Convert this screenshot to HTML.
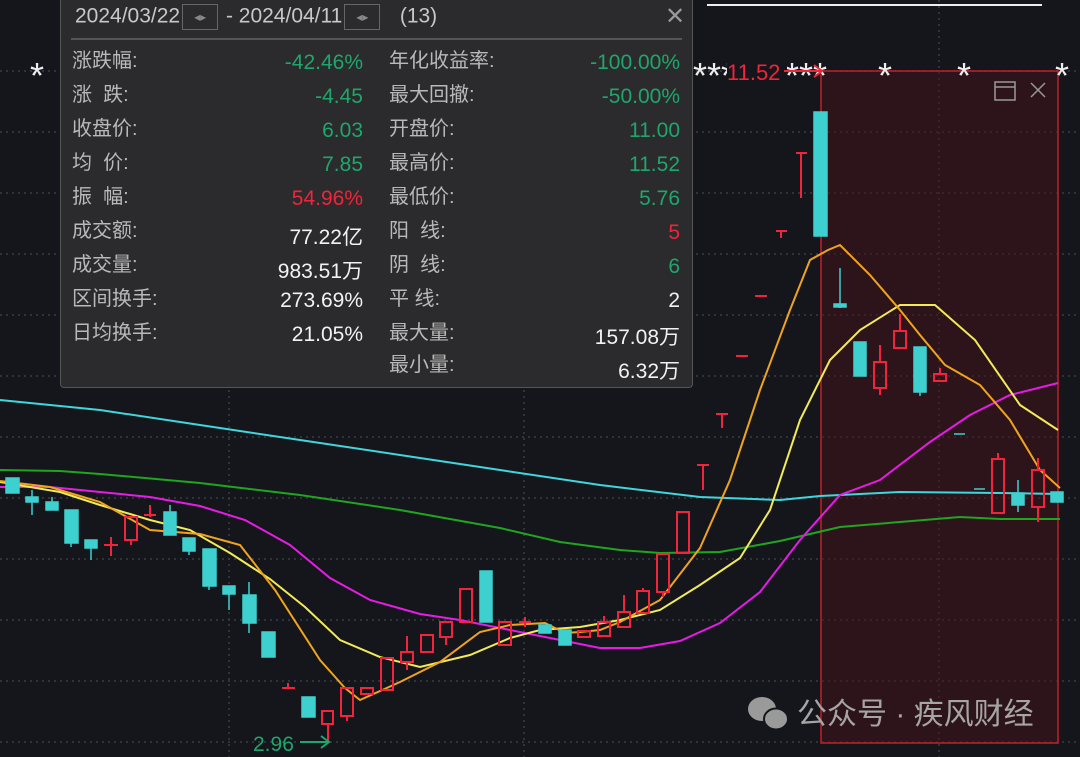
<!DOCTYPE html>
<html><head><meta charset="utf-8"><style>
body{margin:0;background:#14161b;width:1080px;height:757px;overflow:hidden;position:relative;font-family:"Liberation Sans","Noto Sans CJK SC",sans-serif}
svg{position:absolute;left:0;top:0}
.panel{position:absolute;left:60px;top:0;width:633px;height:388px;background:rgba(44,44,46,0.97);border:1px solid #555;border-top:none;border-radius:0 0 4px 4px;box-sizing:border-box}
.hd{position:absolute;top:4px;left:14px;color:#c8c8c8;font-size:21px;white-space:nowrap}
.ab{display:inline-block;width:34px;height:24px;border:1px solid #666;vertical-align:middle;margin:0 2px;font-size:12px;color:#888;text-align:center;line-height:24px}
.sep{position:absolute;left:10px;right:10px;top:38px;border-top:2px solid #555}
.r{position:absolute;font-size:20px;white-space:nowrap}
.l{color:#b9b9b9}
.v{text-align:right;width:200px;font-size:21px}
.g{color:#1fa66c}.rd{color:#f0243a}.w{color:#f2f2f2}
</style></head><body>
<svg width="1080" height="757">
<g stroke="#3a3d44" stroke-width="1.5" stroke-dasharray="2 4">
<line x1="0" y1="71" x2="1080" y2="71"/><line x1="0" y1="132" x2="1080" y2="132"/><line x1="0" y1="193" x2="1080" y2="193"/><line x1="0" y1="254" x2="1080" y2="254"/><line x1="0" y1="315" x2="1080" y2="315"/><line x1="0" y1="376" x2="1080" y2="376"/><line x1="0" y1="437" x2="1080" y2="437"/><line x1="0" y1="498" x2="1080" y2="498"/><line x1="0" y1="559" x2="1080" y2="559"/><line x1="0" y1="620" x2="1080" y2="620"/><line x1="0" y1="681" x2="1080" y2="681"/><line x1="0" y1="742" x2="1080" y2="742"/>
<line x1="229" y1="0" x2="229" y2="757"/><line x1="524" y1="0" x2="524" y2="757"/><line x1="939" y1="0" x2="939" y2="757"/>
</g>
<line x1="707" y1="5" x2="1042" y2="5" stroke="#eee" stroke-width="2"/>
<rect x="821" y="71" width="237" height="672" fill="rgba(70,18,26,0.5)" stroke="#c0202a" stroke-width="1.5"/>
<g fill="none" stroke-width="2">
<polyline stroke="#3fd6dc" points="0,400 100,410 200,425 300,440 400,455 500,470 600,485 700,497 780,500 820,496 900,492 1000,493 1060,494"/>
<polyline stroke="#1fa51f" points="0,470 60,471 100,474 200,483 300,495 400,510 500,528 560,542 620,550 660,553 720,552 780,541 840,527 900,522 960,517 1000,519 1060,519"/>
<polyline stroke="#e61ce6" points="0,487 50,487 100,492 150,497 200,506 245,520 290,545 330,578 370,600 420,614 460,620 500,628 560,640 600,648 640,648 680,641 720,623 760,592 800,540 840,495 880,480 930,442 970,415 1010,395 1058,383"/>
<polyline stroke="#f2ea58" points="0,482 60,492 100,505 150,520 190,530 230,553 270,579 305,607 340,640 380,657 420,667 470,655 510,638 540,630 580,627 620,620 660,610 700,585 740,558 770,510 800,420 830,360 860,330 900,305 935,305 975,340 1020,405 1058,430"/>
<polyline stroke="#f0a31e" points="0,481 50,487 100,502 150,530 200,534 240,545 275,590 320,660 345,688 360,700 400,682 440,662 480,632 510,625 545,623 565,633 580,632 600,630 620,622 660,600 700,548 730,480 760,390 790,310 810,260 828,250 840,245 870,275 900,310 920,335 945,365 980,385 1010,420 1040,470 1060,488"/>
</g>
<g fill="#3ecfcf" stroke="#3ecfcf" stroke-width="1.5">
<rect x="6" y="478" width="13" height="15"/>
<line x1="32" y1="490" x2="32" y2="515"/><rect x="26" y="497" width="12" height="5"/>
<line x1="52" y1="497" x2="52" y2="510"/><rect x="46" y="502" width="12" height="8"/>
<rect x="65" y="510" width="13" height="33"/><line x1="71" y1="543" x2="71" y2="547"/>
<rect x="85" y="540" width="12" height="8"/><line x1="91" y1="548" x2="91" y2="560"/>
<rect x="164" y="512" width="12" height="23"/><line x1="170" y1="505" x2="170" y2="512"/>
<rect x="183" y="538" width="12" height="13"/><line x1="189" y1="551" x2="189" y2="555"/>
<rect x="203" y="549" width="13" height="37"/><line x1="209" y1="586" x2="209" y2="590"/>
<rect x="223" y="586" width="12" height="8"/><line x1="229" y1="594" x2="229" y2="610"/>
<rect x="243" y="595" width="13" height="28"/><line x1="249" y1="582" x2="249" y2="633"/>
<rect x="262" y="632" width="13" height="25"/>
<rect x="302" y="697" width="13" height="20"/>
<rect x="480" y="571" width="12" height="51"/>
<rect x="539" y="625" width="12" height="8"/>
<rect x="559" y="630" width="12" height="15"/>
<rect x="814" y="112" width="13" height="124"/>
<line x1="840" y1="268" x2="840" y2="308"/><rect x="834" y="304" width="12" height="3"/>
<rect x="854" y="342" width="12" height="34"/>
<rect x="914" y="347" width="12" height="45"/><line x1="920" y1="392" x2="920" y2="396"/>
<line x1="954" y1="434" x2="965" y2="434"/>
<line x1="974" y1="489" x2="985" y2="489"/>
<rect x="1012" y="493" width="12" height="12"/><line x1="1018" y1="480" x2="1018" y2="512"/>
<rect x="1051" y="492" width="12" height="10"/>
</g>
<g fill="none" stroke="#f0243a" stroke-width="2">
<path d="M104 545h14M111 537v19"/>
<rect x="125" y="517" width="12" height="23"/><path d="M131 540v5"/>
<path d="M144 515h12M150 505v12"/>
<path d="M282 688h13M288 683v5"/>
<rect x="322" y="711" width="11" height="13"/><path d="M328 724v18"/>
<rect x="341" y="688" width="12" height="28"/><path d="M347 716v5"/>
<rect x="361" y="688" width="12" height="6"/>
<rect x="381" y="658" width="12" height="32"/>
<rect x="401" y="652" width="12" height="10"/><path d="M407 636v16M407 662v8"/>
<rect x="421" y="635" width="12" height="17"/>
<rect x="440" y="622" width="12" height="15"/><path d="M446 637v8"/>
<rect x="460" y="589" width="12" height="33"/>
<rect x="499" y="622" width="12" height="23"/>
<path d="M519 622h12M525 617v10"/>
<rect x="578" y="631" width="12" height="6"/>
<rect x="598" y="622" width="12" height="14"/><path d="M604 616v6"/>
<rect x="618" y="612" width="12" height="15"/><path d="M624 595v17"/>
<rect x="637" y="591" width="12" height="22"/><path d="M643 588v3"/>
<rect x="657" y="554" width="12" height="38"/><path d="M663 592v5"/>
<rect x="677" y="512" width="12" height="41"/>
<path d="M697 465h12M703 465v25M716 414h12M722 414v14M736 356h12M755 296h12M776 231h11M781 231v7M796 153h11M801 153v45"/>
<rect x="874" y="362" width="12" height="26"/><path d="M880 345v17M880 388v7"/>
<rect x="894" y="331" width="12" height="17"/><path d="M900 314v17"/>
<rect x="934" y="374" width="12" height="7"/><path d="M940 368v6"/>
<rect x="992" y="459" width="12" height="54"/><path d="M998 453v6"/>
<rect x="1032" y="470" width="12" height="37"/><path d="M1038 458v12M1038 507v15"/>
</g>
<g fill="#eee" font-size="36" font-family="Liberation Sans">
<text x="30" y="88">*</text><text x="693" y="88">***</text><text x="785" y="88">***</text><text x="878" y="88">*</text><text x="957" y="88">*</text><text x="1055" y="88">*</text>
</g>
<rect x="727" y="60" width="60" height="22" fill="#14161b"/>
<text x="727" y="80" fill="#f0243a" font-size="22" font-family="Liberation Sans">11.52</text>
<path d="M784 71h38M814 65l8 6-8 6" stroke="#f0243a" stroke-width="2" fill="none"/>
<text x="253" y="751" fill="#1fa66c" font-size="21" font-family="Liberation Sans">2.96</text>
<path d="M300 742h29M321 736l8 6-8 6" stroke="#1fa66c" stroke-width="2" fill="none"/>
<rect x="995" y="82" width="20" height="18" fill="none" stroke="#999" stroke-width="1.5"/><line x1="995" y1="87" x2="1015" y2="87" stroke="#999" stroke-width="1.5"/>
<path d="M1031 83l14 14M1045 83l-14 14" stroke="#999" stroke-width="1.5"/>
<g fill="#9a9a9a"><ellipse cx="762" cy="709" rx="14" ry="12"/><ellipse cx="776" cy="719" rx="12" ry="10.5" stroke="#14161b" stroke-width="2"/></g>
<text x="797" y="724" fill="#a5a5a5" font-size="30" font-family="Liberation Sans,Noto Sans CJK SC,sans-serif">公众号 · 疾风财经</text>
</svg>
<div class="panel">
<div class="hd">2024/03/22<span class="ab">◂▸</span> - 2024/04/11<span class="ab">◂▸</span> &nbsp; (13)<span style="position:absolute;left:590px;top:-2px;font-size:24px;color:#999">✕</span></div>
<div class="sep"></div>
</div>
<div class="r l" style="left:72px;top:44px">涨跌幅:</div><div class="r v g" style="left:163px;top:51px">-42.46%</div>
<div class="r l" style="left:72px;top:78px">涨&nbsp;&nbsp;跌:</div><div class="r v g" style="left:163px;top:85px">-4.45</div>
<div class="r l" style="left:72px;top:112px">收盘价:</div><div class="r v g" style="left:163px;top:119px">6.03</div>
<div class="r l" style="left:72px;top:146px">均&nbsp;&nbsp;价:</div><div class="r v g" style="left:163px;top:153px">7.85</div>
<div class="r l" style="left:72px;top:180px">振&nbsp;&nbsp;幅:</div><div class="r v rd" style="left:163px;top:187px">54.96%</div>
<div class="r l" style="left:72px;top:214px">成交额:</div><div class="r v w" style="left:163px;top:221px">77.22亿</div>
<div class="r l" style="left:72px;top:248px">成交量:</div><div class="r v w" style="left:163px;top:255px">983.51万</div>
<div class="r l" style="left:72px;top:282px">区间换手:</div><div class="r v w" style="left:163px;top:289px">273.69%</div>
<div class="r l" style="left:72px;top:316px">日均换手:</div><div class="r v w" style="left:163px;top:323px">21.05%</div>
<div class="r l" style="left:389px;top:44px">年化收益率:</div><div class="r v g" style="left:480px;top:51px">-100.00%</div>
<div class="r l" style="left:389px;top:78px">最大回撤:</div><div class="r v g" style="left:480px;top:85px">-50.00%</div>
<div class="r l" style="left:389px;top:112px">开盘价:</div><div class="r v g" style="left:480px;top:119px">11.00</div>
<div class="r l" style="left:389px;top:146px">最高价:</div><div class="r v g" style="left:480px;top:153px">11.52</div>
<div class="r l" style="left:389px;top:180px">最低价:</div><div class="r v g" style="left:480px;top:187px">5.76</div>
<div class="r l" style="left:389px;top:214px">阳&nbsp;&nbsp;线:</div><div class="r v rd" style="left:480px;top:221px">5</div>
<div class="r l" style="left:389px;top:248px">阴&nbsp;&nbsp;线:</div><div class="r v g" style="left:480px;top:255px">6</div>
<div class="r l" style="left:389px;top:282px">平&nbsp;线:</div><div class="r v w" style="left:480px;top:289px">2</div>
<div class="r l" style="left:389px;top:316px">最大量:</div><div class="r v w" style="left:480px;top:321px">157.08万</div>
<div class="r l" style="left:389px;top:348px">最小量:</div><div class="r v w" style="left:480px;top:355px">6.32万</div>
</body></html>
